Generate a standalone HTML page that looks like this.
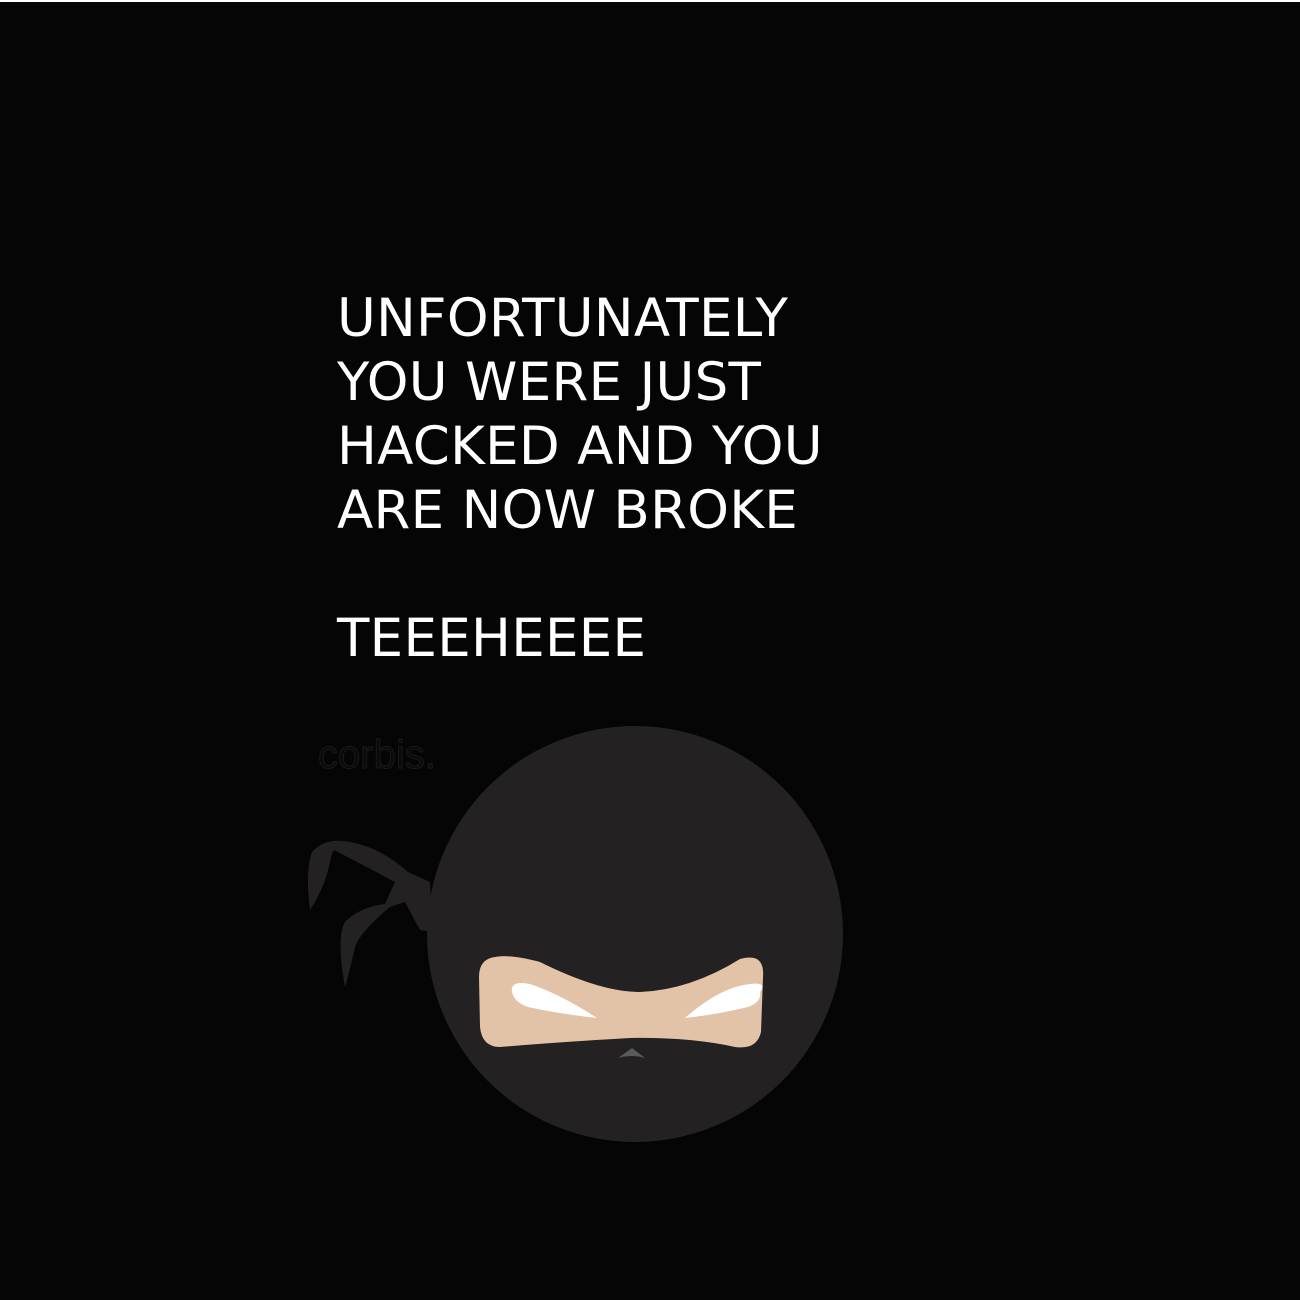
<!DOCTYPE html>
<html><head><style>
html,body{margin:0;padding:0;background:#050505;overflow:hidden;}
body{width:1300px;height:1300px;position:relative;overflow:hidden;border-top:2px solid #fff;box-sizing:border-box;}
.t{position:absolute;left:337px;color:#fff;font-family:"DejaVu Sans","Liberation Sans",sans-serif;font-size:53px;letter-spacing:0.3px;line-height:64px;white-space:nowrap;}
svg{position:absolute;left:0;top:0;}
</style></head><body>
<div class="t" style="top:285px">UNFORTUNATELY<br>YOU WERE JUST<br>HACKED AND YOU<br>ARE NOW BROKE<br><br>TEEEHEEEE</div>
<svg width="1300" height="1300" viewBox="0 0 1300 1300">
<text x="318" y="766" font-family="Liberation Sans,sans-serif" font-size="40" fill="#0a0a0a" stroke="#1a1a1a" stroke-width="1">corbis.</text>
<path d="M430,880 L408,870 Q380,845 350,840 Q325,835 312,850 Q305,870 310,908 Q325,885 330,860 Q332,850 334,848 L395,880 L385,902 Q360,905 345,920 Q336,935 345,985 Q352,960 355,945 Q360,930 390,905 L405,900 L420,928 L432,930 Z" fill="#232122"/>
<circle cx="635" cy="932" r="208" fill="#232122"/>
<path d="M495,955 Q510,952 540,960 Q600,990 640,990 Q690,988 740,957 Q765,950 763,975 L761,1030 Q757,1048 735,1045 Q690,1035 630,1036 Q560,1040 500,1045 Q482,1045 480,1025 L479,975 Q479,957 495,955 Z" fill="#e2c3a8"/>
<path d="M512,990 Q510,978 530,982 Q560,992 597,1016 Q560,1012 528,1005 Q514,1000 512,990 Z" fill="#fff"/>
<path d="M760,990 Q768,980 750,982 Q720,985 685,1016 Q720,1012 748,1005 Q762,1000 760,990 Z" fill="#fff"/>
<path d="M618,1056 L632,1046 L645,1056 Q632,1052 618,1056 Z" fill="#5a5a5a"/>
</svg>
</body></html>
